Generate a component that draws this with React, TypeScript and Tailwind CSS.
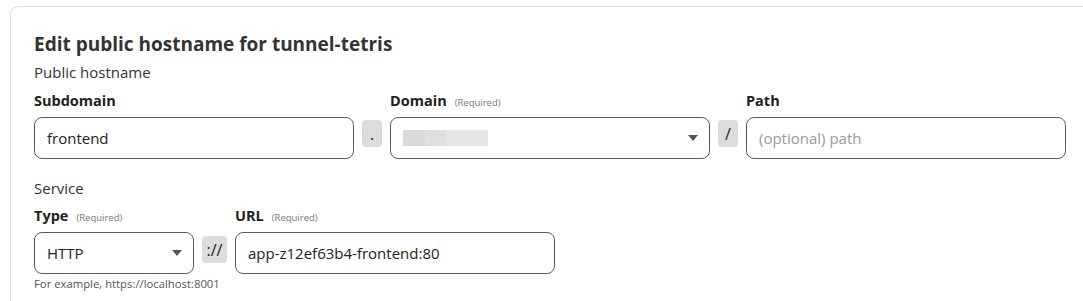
const FONT = "font-['Open_Sans',_'Noto_Sans',_sans-serif]";

function Label({ text, required }: { text: string; required?: boolean }) {
  return (
    <div className="flex h-[20px] items-baseline gap-2 text-[14.5px] leading-[20px]">
      <span className="font-bold text-[#222]">{text}</span>
      {required && <span className="text-[9.5px] text-[#777]">(Required)</span>}
    </div>
  );
}

function Sep({ char, wide }: { char: string; wide?: boolean }) {
  return (
    <div
      className={`mt-[3px] flex h-[27px] items-center justify-center rounded-[4px] bg-[#dcdcdc] text-[16px] text-[#222] ${
        wide ? "w-[25px]" : "w-[20px]"
      }`}
    >
      {char}
    </div>
  );
}

function Caret() {
  return (
    <svg width="10" height="6" viewBox="0 0 10 6" className="shrink-0">
      <path d="M0 0h10L5 6z" fill="#555" />
    </svg>
  );
}

const boxCls =
  "flex h-[42px] items-center rounded-[8px] border border-[#5c5c5c] bg-white px-3 text-[15px] text-[#222]";

export default function App() {
  return (
    <div className={`h-[301px] w-[1083px] overflow-hidden bg-white ${FONT}`}>
      <div className="ml-[10px] mt-[6px] w-[1100px] rounded-[8px] border border-[#dedede] pb-6 pl-[23px] pt-[25px]">
        <h2 className="text-[19px] font-bold leading-[24px] text-[#333]">
          Edit public hostname for tunnel-tetris
        </h2>
        <p className="mt-[6px] text-[15px] leading-[20px] text-[#333]">Public hostname</p>

        <div className="mt-[9px] flex gap-2">
          <div className="flex w-[320px] flex-col gap-[6px]">
            <Label text="Subdomain" />
            <div className={boxCls}>frontend</div>
          </div>
          <div className="pt-[26px]">
            <Sep char="." />
          </div>
          <div className="flex w-[320px] flex-col gap-[6px]">
            <Label text="Domain" required />
            <div className={`${boxCls} justify-between pr-[11px]`}>
              <div className="flex h-[16px]">
                <div className="w-[22px] bg-[#dadada]" />
                <div className="w-[21px] bg-[#dedede]" />
                <div className="w-[42px] bg-[#e6e6e6]" />
              </div>
              <Caret />
            </div>
          </div>
          <div className="pt-[26px]">
            <Sep char="/" />
          </div>
          <div className="flex w-[320px] flex-col gap-[6px]">
            <Label text="Path" />
            <div className={`${boxCls} text-[#999]`}>(optional) path</div>
          </div>
        </div>

        <p className="mt-[19px] text-[15px] leading-[20px] text-[#333]">Service</p>

        <div className="mt-[8px] flex gap-2">
          <div className="flex w-[160px] flex-col gap-[6px]">
            <Label text="Type" required />
            <div className={`${boxCls} justify-between pr-[11px]`}>
              <span>HTTP</span>
              <Caret />
            </div>
            <p className="-mt-[4px] text-[11.3px] leading-[16px] whitespace-nowrap text-[#555]">
              For example, https://localhost:8001
            </p>
          </div>
          <div className="pt-[27px]">
            <Sep char="://" wide />
          </div>
          <div className="flex w-[320px] flex-col gap-[6px]">
            <Label text="URL" required />
            <div className={boxCls}>app-z12ef63b4-frontend:80</div>
          </div>
        </div>
      </div>
    </div>
  );
}
